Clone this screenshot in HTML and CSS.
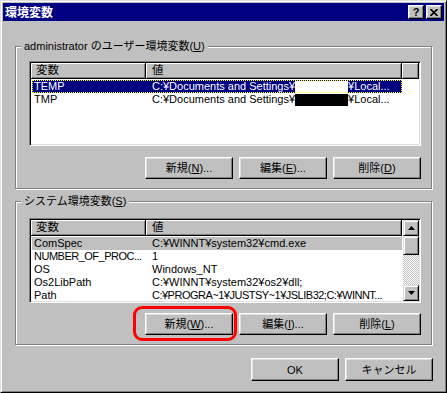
FILE: index.html
```html
<!DOCTYPE html>
<html lang="ja">
<head>
    <meta charset="UTF-8">
    <meta name="viewport" content="width=device-width, initial-scale=1.0">
    <title>環境変数</title>
    <link rel="stylesheet" href="styles.css">
</head>
<body>

    <div class="window">
        <div class="titlebar">
            <span class="title">環境変数</span>
            <div class="title-buttons">
                <span class="tbtn help">?</span>
                <span class="tbtn">
                    <svg width="8" height="7" viewBox="0 0 8 7"><path d="M0.5 0 L7.5 7 M7.5 0 L0.5 7" stroke="#000" stroke-width="1.6"/></svg>
                </span>
            </div>
        </div>

        <div class="dialog">
            <!-- user variables -->
            <div class="group">
                <div class="group-label">administrator のユーザー環境変数(<u>U</u>)</div>
                <div class="listview first">
                    <div class="lv-main">
                        <div class="lv-header">
                            <div class="hcell c1">変数</div>
                            <div class="hcell c2">値</div>
                            <div class="hcell fill"></div>
                        </div>
                        <div class="lv-rows">
                            <div class="row selected">
                                <span class="c1">TEMP</span>
                                <span class="c2">C:¥Documents and Settings¥<span class="redact white"></span>¥Local...</span>
                            </div>
                            <div class="row">
                                <span class="c1">TMP</span>
                                <span class="c2">C:¥Documents and Settings¥<span class="redact black"></span>¥Local...</span>
                            </div>
                        </div>
                    </div>
                </div>
                <div class="btn-row first">
                    <button class="btn">新規(<u>N</u>)...</button>
                    <button class="btn">編集(<u>E</u>)...</button>
                    <button class="btn">削除(<u>D</u>)</button>
                </div>
            </div>

            <!-- system variables -->
            <div class="group second">
                <div class="group-label">システム環境変数(<u>S</u>)</div>
                <div class="listview">
                    <div class="lv-main">
                        <div class="lv-header">
                            <div class="hcell c1">変数</div>
                            <div class="hcell c2">値</div>
                        </div>
                        <div class="lv-rows">
                            <div class="row inactive">
                                <span class="c1">ComSpec</span>
                                <span class="c2">C:¥WINNT¥system32¥cmd.exe</span>
                            </div>
                            <div class="row">
                                <span class="c1 tight">NUMBER_OF_PROC...</span>
                                <span class="c2">1</span>
                            </div>
                            <div class="row">
                                <span class="c1">OS</span>
                                <span class="c2">Windows_NT</span>
                            </div>
                            <div class="row">
                                <span class="c1">Os2LibPath</span>
                                <span class="c2">C:¥WINNT¥system32¥os2¥dll;</span>
                            </div>
                            <div class="row">
                                <span class="c1">Path</span>
                                <span class="c2 tight">C:¥PROGRA~1¥JUSTSY~1¥JSLIB32;C:¥WINNT...</span>
                            </div>
                        </div>
                    </div>
                    <div class="scrollbar">
                        <div class="sb-btn">
                            <svg width="7" height="4" viewBox="0 0 7 4"><polygon points="3.5,0 7,4 0,4" fill="#000"/></svg>
                        </div>
                        <div class="sb-thumb"></div>
                        <div class="sb-track"></div>
                        <div class="sb-btn">
                            <svg width="7" height="4" viewBox="0 0 7 4"><polygon points="0,0 7,0 3.5,4" fill="#000"/></svg>
                        </div>
                    </div>
                </div>
                <div class="btn-row">
                    <span class="marked">
                        <button class="btn">新規(<u>W</u>)...</button>
                    </span>
                    <button class="btn">編集(<u>I</u>)...</button>
                    <button class="btn">削除(<u>L</u>)</button>
                </div>
            </div>

            <div class="footer">
                <button class="btn">OK</button>
                <button class="btn">キャンセル</button>
            </div>
        </div>
    </div>

</body>
</html>
```

FILE: styles.css
```css
/* Reset */
* {
    margin: 0;
    padding: 0;
    box-sizing: border-box;
}

body {
    background: #c0c0c0;
    font-family: "Liberation Sans", "Noto Sans CJK JP", sans-serif;
    font-size: 11px;
    color: #000;
}

/* Window frame */
.window {
    width: 447px;
    height: 393px;
    border: 1px solid;
    border-color: #dfdfdf #000 #000 #dfdfdf;
    box-shadow: inset 1px 1px #fff, inset -1px -1px #808080;
    padding: 2px;
    background: #c0c0c0;
}

.titlebar {
    height: 18px;
    background: #000080;
    color: #fff;
    display: flex;
    align-items: center;
    justify-content: space-between;
    padding: 0 2px;
}

.title {
    font-family: "Noto Sans CJK JP", sans-serif;
    font-weight: bold;
    font-size: 12px;
    line-height: 14px;
}

.title-buttons {
    display: flex;
    gap: 2px;
}

.tbtn {
    width: 16px;
    height: 14px;
    display: flex;
    align-items: center;
    justify-content: center;
    background: #c0c0c0;
    border: 1px solid;
    border-color: #fff #000 #000 #fff;
    box-shadow: inset -1px -1px #808080, inset 1px 1px #dfdfdf;
    color: #000;
}

.tbtn.help {
    font-weight: bold;
    font-size: 11px;
    line-height: 11px;
}

/* Dialog body */
.dialog {
    padding: 0 12px;
}

.group {
    margin-top: 25px;
    border: 1px solid #808080;
    box-shadow: inset 1px 1px #fff, 1px 1px #fff;
    padding: 0 10px 9px 13px;
}

.group.second {
    margin-top: 12px;
}

.group-label {
    width: fit-content;
    margin: -7px 0 0 -8px;
    padding: 0 3px;
    background: #c0c0c0;
    line-height: 13px;
    height: 13px;
}

/* List view */
.listview {
    margin-top: 10px;
    height: 85px;
    display: flex;
    background: #fff;
    border: 1px solid;
    border-color: #808080 #fff #fff #808080;
    box-shadow: inset 1px 1px #000, inset -1px -1px #dfdfdf;
    padding: 1px;
    overflow: hidden;
}

.listview.first {
    margin-top: 8px;
}

.lv-main {
    flex: 1;
    min-width: 0;
    display: flex;
    flex-direction: column;
    overflow: hidden;
}

.lv-header {
    display: flex;
    height: 16px;
    flex-shrink: 0;
}

.hcell {
    background: #c0c0c0;
    border-right: 1px solid #000;
    border-bottom: 1px solid #000;
    box-shadow: inset 1px 1px #fff, inset -1px -1px #808080;
    line-height: 15px;
    font-size: 11.5px;
}

.hcell.c1 {
    width: 115px;
    padding-left: 5px;
}

.hcell.c2 {
    width: 256px;
    padding-left: 6px;
}

.hcell.fill {
    flex: 1;
}

.lv-rows {
    padding: 1px 0 0 1px;
}

.row {
    display: flex;
    width: 370px;
    height: 13px;
    line-height: 13px;
    white-space: nowrap;
}

.row .c1 {
    width: 114px;
    flex-shrink: 0;
    padding-left: 2px;
    overflow: hidden;
}

.row .c2 {
    flex: 1;
    min-width: 0;
    padding-left: 6px;
    overflow: hidden;
}

.row .tight {
    letter-spacing: -0.5px;
}

.row.selected {
    background: #000080;
    color: #fff;
    outline: 1px dotted #ffff00;
    outline-offset: -1px;
}

.row.inactive {
    background: #c0c0c0;
}

.redact {
    display: inline-block;
    width: 53px;
    height: 12px;
    vertical-align: top;
    margin-top: 1px;
}

.redact.white {
    background: #fff;
}

.redact.black {
    background: #000;
}

/* Scroll bar */
.scrollbar {
    width: 16px;
    display: flex;
    flex-direction: column;
}

.sb-btn,
.sb-thumb {
    background: #c0c0c0;
    border: 1px solid;
    border-color: #dfdfdf #000 #000 #dfdfdf;
    box-shadow: inset 1px 1px #fff, inset -1px -1px #808080;
}

.sb-btn {
    height: 16px;
    display: flex;
    align-items: center;
    justify-content: center;
    flex-shrink: 0;
}

.sb-thumb {
    height: 19px;
    flex-shrink: 0;
}

.sb-track {
    flex: 1;
    background-image: conic-gradient(#fff 25%, #c0c0c0 0 50%, #fff 0 75%, #c0c0c0 0);
    background-size: 2px 2px;
}

/* Buttons */
.btn-row {
    display: flex;
    justify-content: flex-end;
    gap: 6px;
    margin-top: 10px;
}

.btn-row.first {
    margin-top: 11px;
}

.btn {
    width: 88px;
    height: 22px;
    background: #c0c0c0;
    border: 1px solid;
    border-color: #fff #000 #000 #fff;
    box-shadow: inset -1px -1px #808080, inset 1px 1px #dfdfdf;
    font-family: "Liberation Sans", "Noto Sans CJK JP", sans-serif;
    font-size: 11px;
    color: #000;
    line-height: 12px;
}

.marked {
    position: relative;
    display: flex;
}

.marked::after {
    content: "";
    position: absolute;
    left: -12px;
    top: -7px;
    right: -4px;
    bottom: -6px;
    border: 3px solid #ff0000;
    border-radius: 9px;
}

.footer {
    display: flex;
    justify-content: flex-end;
    gap: 6px;
    margin: 13px -1px 0 0;
}

.footer .btn {
    height: 23px;
}
```
